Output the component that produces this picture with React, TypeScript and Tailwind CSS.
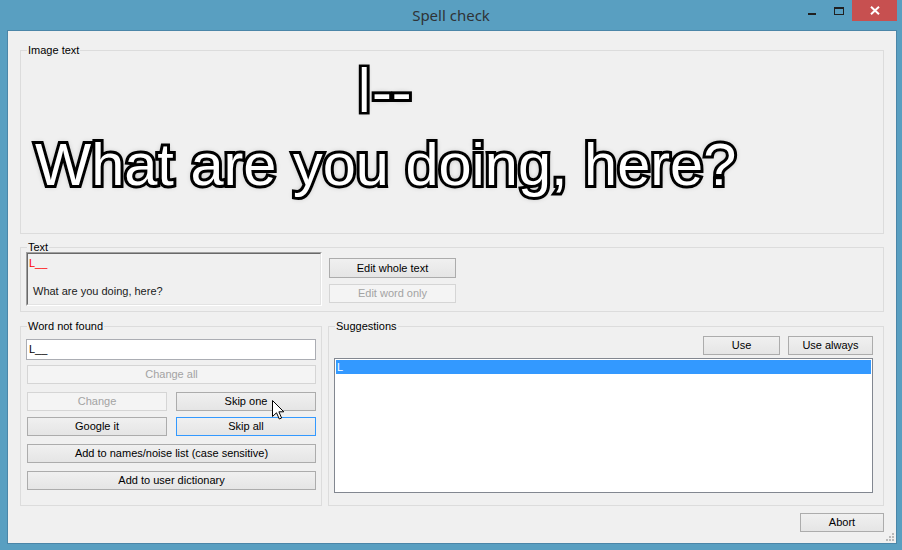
import React from "react";

type BtnProps = {
  children: React.ReactNode;
  className?: string;
  kind?: "normal" | "disabled" | "focus";
};

function Btn({ children, className = "", kind = "normal" }: BtnProps) {
  const look =
    kind === "disabled"
      ? "border-[#d5d5d5] bg-[#f4f4f4] text-[#a3a3a3]"
      : kind === "focus"
      ? "border-[#3399ff] bg-linear-to-b from-[#f0f0f0] to-[#e5e5e5] text-black"
      : "border-[#acacac] bg-linear-to-b from-[#f0f0f0] to-[#e5e5e5] text-black";
  return (
    <div
      className={
        "flex items-center justify-center border text-[11px] leading-[13px] whitespace-nowrap " +
        look +
        " " +
        className
      }
    >
      {children}
    </div>
  );
}

function Group({
  label,
  className = "",
  children,
}: {
  label: string;
  className?: string;
  children?: React.ReactNode;
}) {
  return (
    <div className={"flex flex-col border border-[#dcdcdc] " + className}>
      <div className="-mt-[7px] mb-[-6px] ml-[6px] self-start h-[13px] bg-[#f0f0f0] px-px text-[11px] leading-[13px] text-black">
        {label}
      </div>
      {children}
    </div>
  );
}

export default function App() {
  return (
    <div className="relative w-[902px] h-[550px] overflow-hidden bg-[#599fc1] font-['Liberation_Sans',Arial,sans-serif] text-[11px] text-black flex flex-col">
      {/* Title bar */}
      <div className="h-[30px] shrink-0 grid grid-cols-[1fr_auto_1fr] items-start">
        <div />
        <div className="pt-[5px] text-[15px] leading-[20px] text-[#2f3337] font-['Noto_Sans','Open_Sans',sans-serif]">
          Spell check
        </div>
        <div className="flex justify-end pr-[5px]">
          <div className="w-[27px] h-[21px] pt-[13px] pl-[9px]">
            <div className="w-[8px] h-[2px] bg-[#202020]" />
          </div>
          <div className="w-[26px] h-[21px] pt-[7px] pl-[8px]">
            <div className="w-[10px] h-[8px] border border-t-2 border-[#202020]" />
          </div>
          <div className="w-[45px] h-[21px] bg-[#c75050] flex items-center justify-center">
            <svg width="10" height="9" viewBox="0 0 10 9">
              <path d="M1 0.8 L9 8.2 M9 0.8 L1 8.2" stroke="#ffffff" strokeWidth="2" />
            </svg>
          </div>
        </div>
      </div>

      {/* Client area */}
      <div className="relative ml-[7px] mr-[5px] mb-[6px] flex-1 border border-[#4b86a8] bg-[#f0f0f0] px-[12px] pt-[19px] flex flex-col">
        {/* Image text */}
        <Group label="Image text" className="h-[184px]">
          <div className="pt-[4px] pl-[14px] self-start flex flex-col items-center whitespace-nowrap text-[59.5px] leading-[73px] text-white font-['Liberation_Sans',Arial,sans-serif] [-webkit-text-stroke:6px_#000] [paint-order:stroke_fill] [text-shadow:0_0_3px_rgba(0,0,0,0.9),0_0_6px_rgba(0,0,0,0.45)]">
            <div className="-ml-[3px]">
              <span className="inline-block origin-top scale-y-[0.82]">|</span>--
            </div>
            <div>What are you doing, here?</div>
          </div>
        </Group>

        {/* Text */}
        <Group label="Text" className="h-[65px] mt-[13px]">
          <div className="flex items-start pl-[5px] pt-[4px]">
            <div className="w-[296px] h-[54px] border border-t-[#a0a0a0] border-l-[#a0a0a0] border-b-white border-r-white">
              <div className="h-full border border-t-[#696969] border-l-[#696969] border-b-[#e3e3e3] border-r-[#e3e3e3] bg-[#f0f0f0] pt-[2px] pl-px text-[11px] leading-[14px]">
                <div className="text-[#ff0000]">L__</div>
                <div className="h-[14px]" />
                <div className="pl-[4px] text-[#1a1a1a]">What are you doing, here?</div>
              </div>
            </div>
            <div className="ml-[7px] mt-[6px] flex flex-col gap-[6px]">
              <Btn className="w-[127px] h-[20px]">Edit whole text</Btn>
              <Btn kind="disabled" className="w-[127px] h-[19px]">
                Edit word only
              </Btn>
            </div>
          </div>
        </Group>

        {/* Bottom row */}
        <div className="mt-[14px] flex gap-[6px]">
          <Group label="Word not found" className="w-[302px] h-[180px]">
            <div className="pt-[12px] flex flex-col">
              <div className="ml-[5px] mr-[5px] h-[21px] border border-[#abadb3] bg-white pl-[2px] flex items-center text-[11px] leading-[13px]">
                L__
              </div>
              <Btn kind="disabled" className="ml-[6px] mr-[5px] mt-[5px] h-[19px]">
                Change all
              </Btn>
              <div className="ml-[6px] mr-[5px] mt-[8px] flex gap-[9px]">
                <Btn kind="disabled" className="flex-1 h-[19px]">
                  Change
                </Btn>
                <Btn className="flex-1 h-[19px]">Skip one</Btn>
              </div>
              <div className="ml-[6px] mr-[5px] mt-[6px] flex gap-[9px]">
                <Btn className="flex-1 h-[19px]">Google it</Btn>
                <Btn kind="focus" className="flex-1 h-[19px]">
                  Skip all
                </Btn>
              </div>
              <Btn className="ml-[6px] mr-[5px] mt-[8px] h-[19px]">
                Add to names/noise list (case sensitive)
              </Btn>
              <Btn className="ml-[6px] mr-[5px] mt-[8px] h-[19px]">Add to user dictionary</Btn>
            </div>
          </Group>

          <Group label="Suggestions" className="flex-1 h-[180px]">
            <div className="pt-[9px] pr-[10px] flex justify-end gap-[8px]">
              <Btn className="w-[77px] h-[19px]">Use</Btn>
              <Btn className="w-[85px] h-[19px]">Use always</Btn>
            </div>
            <div className="mt-[3px] ml-[5px] mr-[10px] h-[135px] border border-[#828790] bg-white p-px">
              <div className="h-[14px] bg-[#3399ff] pl-px text-white text-[11px] leading-[14px]">L</div>
            </div>
          </Group>
        </div>

        {/* Abort */}
        <div className="mt-[7px] flex justify-end">
          <Btn className="w-[84px] h-[19px]">Abort</Btn>
        </div>

        {/* Size grip */}
        <svg
          className="absolute right-[1px] bottom-[1px]"
          width="10"
          height="10"
          viewBox="0 0 10 10"
        >
          <g fill="#b9b9b9">
            <rect x="7" y="1" width="2" height="2" />
            <rect x="4" y="4" width="2" height="2" />
            <rect x="7" y="4" width="2" height="2" />
            <rect x="1" y="7" width="2" height="2" />
            <rect x="4" y="7" width="2" height="2" />
            <rect x="7" y="7" width="2" height="2" />
          </g>
        </svg>
      </div>

      {/* Mouse cursor */}
      <svg
        className="absolute left-[272px] top-[400px]"
        width="13"
        height="20"
        viewBox="0 0 13 20"
      >
        <path
          d="M0.5 0.5 L0.5 16.5 L4.5 12.8 L7.3 19 L9.6 18 L6.9 11.8 L11.8 11.8 Z"
          fill="#ffffff"
          stroke="#000000"
          strokeWidth="1"
          strokeLinejoin="miter"
        />
      </svg>
    </div>
  );
}
